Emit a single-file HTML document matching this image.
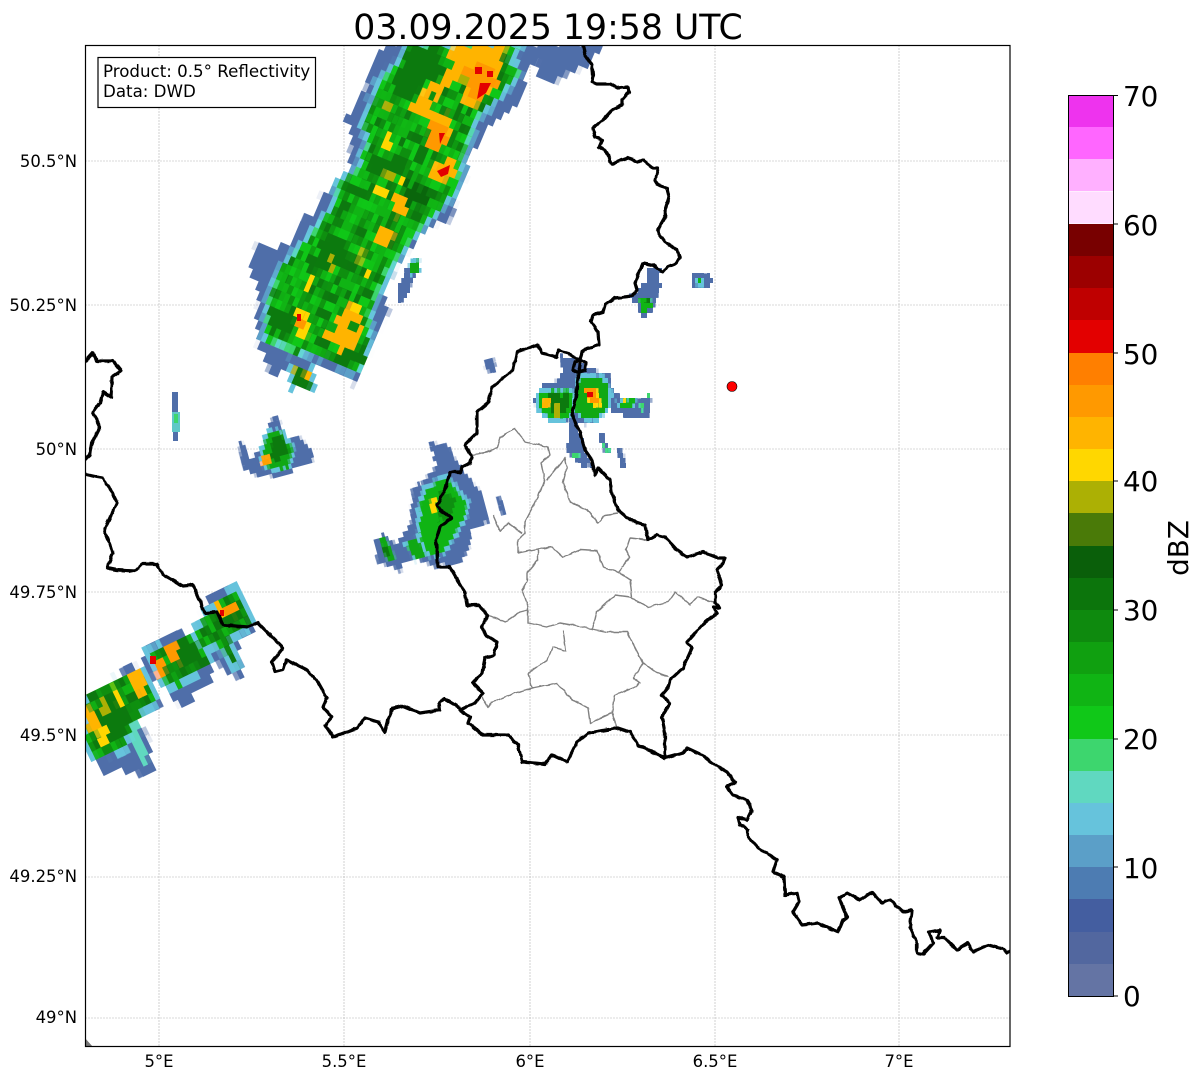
<!DOCTYPE html>
<html><head><meta charset="utf-8"><title>Radar</title>
<style>html,body{margin:0;padding:0;background:#fff}svg{display:block}text{font-family:"DejaVu Sans","Liberation Sans",sans-serif;fill:#000}</style></head>
<body>
<svg xmlns="http://www.w3.org/2000/svg" width="1202" height="1081" viewBox="0 0 1202 1081">
<defs>
<clipPath id="ax"><rect x="85.5" y="45.5" width="924.5" height="1001"/></clipPath>
<filter id="j" filterUnits="userSpaceOnUse" x="0" y="0" width="1202" height="1081" color-interpolation-filters="sRGB">
<feTurbulence type="fractalNoise" baseFrequency=".16" numOctaves="1" seed="4"/>
<feDisplacementMap in="SourceGraphic" scale="8" xChannelSelector="R" yChannelSelector="G"/>
</filter>
<filter id="j2" filterUnits="userSpaceOnUse" x="0" y="0" width="1202" height="1081" color-interpolation-filters="sRGB">
<feTurbulence type="fractalNoise" baseFrequency=".25" numOctaves="1" seed="9"/>
<feDisplacementMap in="SourceGraphic" scale="5" xChannelSelector="R" yChannelSelector="G"/>
</filter>
<filter id="wig" filterUnits="userSpaceOnUse" x="0" y="0" width="1202" height="1081" color-interpolation-filters="sRGB">
<feTurbulence type="fractalNoise" baseFrequency=".17" numOctaves="1" seed="2"/>
<feDisplacementMap in="SourceGraphic" scale="3" xChannelSelector="R" yChannelSelector="G"/>
</filter>
<filter id="px" filterUnits="userSpaceOnUse" x="-600" y="-600" width="2200" height="2200" color-interpolation-filters="sRGB">
<feFlood x="0" y="0" width="1" height="1" flood-color="#000"/>
<feComposite width="5" height="9"/>
<feTile result="a"/>
<feComposite in="SourceGraphic" in2="a" operator="in"/>
<feMorphology operator="dilate" radius="2 4"/>
</filter>
<filter id="px2" filterUnits="userSpaceOnUse" x="-600" y="-600" width="2200" height="2200" color-interpolation-filters="sRGB">
<feFlood x="0" y="0" width="1" height="1" flood-color="#000"/>
<feComposite width="3" height="5"/>
<feTile result="a"/>
<feComposite in="SourceGraphic" in2="a" operator="in"/>
<feMorphology operator="dilate" radius="1 2"/>
</filter>
<filter id="mDark" x="0" y="0" width="100%" height="100%" color-interpolation-filters="sRGB">
<feTurbulence type="fractalNoise" baseFrequency=".075" numOctaves="2" seed="11"/>
<feColorMatrix values="0 0 0 0 .05 0 0 0 0 .47 0 0 0 0 .06 12 0 0 0 -6.2"/>
</filter>
<filter id="mMid" x="0" y="0" width="100%" height="100%" color-interpolation-filters="sRGB">
<feTurbulence type="fractalNoise" baseFrequency=".09" numOctaves="2" seed="23"/>
<feColorMatrix values="0 0 0 0 .055 0 0 0 0 .56 0 0 0 0 .06 12 0 0 0 -5.5"/>
</filter>
<filter id="mLite" x="0" y="0" width="100%" height="100%" color-interpolation-filters="sRGB">
<feTurbulence type="fractalNoise" baseFrequency=".1" numOctaves="2" seed="37"/>
<feColorMatrix values="0 0 0 0 .06 0 0 0 0 .78 0 0 0 0 .09 12 0 0 0 -6.6"/>
</filter>
<polygon id="mg" points="410,46 400,63 380,83 373,107 363,127 370,140 362,160 363,168 340,183 337,200 333,210 313,233 303,247 283,267 273,293 268,310 267,340 283,343 295,352 310,350 317,353 337,360 357,370 368,343 367,317 373,297 383,280 390,267 407,240 420,227 437,207 453,193 460,170 460,157 467,140 473,120 480,113 503,90 517,73 507,57 520,46"/>
<polygon id="b1" points="86,697 118,680 143,673 155,700 137,717 123,747 97,757 86,743"/>
<polygon id="b2" points="148,653 193,637 208,660 177,687 162,680"/>
<polygon id="b3" points="195,633 208,615 227,597 237,590 250,623 233,635 228,633 237,667 220,647 203,647"/>
<clipPath id="cm"><use href="#mg"/></clipPath>
<clipPath id="cb"><use href="#b1"/><use href="#b2"/><use href="#b3"/></clipPath>
</defs>
<rect width="1202" height="1081" fill="#fff"/>
<g stroke="#b4b4b4" stroke-width=".6" stroke-dasharray="2 1" fill="none">
<path d="M159 45V1047M344 45V1047M530 45V1047M715 45V1047M899 45V1047"/>
<path d="M85 161H1010M85 305H1010M85 449H1010M85 592H1010M85 735H1010M85 877H1010M85 1018H1010"/>
</g>
<g clip-path="url(#ax)">

<!-- main storm -->
<g transform="rotate(23)"><g filter="url(#px)"><g transform="rotate(-23)">
<g filter="url(#j)">
<polygon fill="#4f6ea9" stroke="#4f6ea9" stroke-width="6" stroke-linejoin="round" points="390,46 375,65 367,90 360,108 348,118 357,137 352,153 355,167 337,187 323,197 317,217 303,220 290,247 280,247 278,253 258,247 253,273 263,280 260,307 262,330 258,340 265,350 273,373 287,366 305,372 315,366 320,360 340,373 355,382 360,368 372,340 387,313 378,287 390,270 410,247 423,223 447,220 460,187 467,173 462,157 478,143 480,130 507,110 527,83 517,73 540,57 543,73 550,80 580,67 600,50 602,46"/>
<use href="#mg" fill="#5b9fc8" stroke="#5b9fc8" stroke-width="13" stroke-linejoin="round"/>
<use href="#mg" fill="#66c3dc" stroke="#66c3dc" stroke-width="8" stroke-linejoin="round"/>
<use href="#mg" fill="#3dd66e" stroke="#3dd66e" stroke-width="3" stroke-linejoin="round"/>
<use href="#mg" fill="#10b414"/>
<g clip-path="url(#cm)">
<rect x="250" y="40" width="300" height="360" filter="url(#mMid)"/>
<rect x="250" y="40" width="300" height="360" filter="url(#mDark)"/>
<rect x="250" y="40" width="300" height="360" filter="url(#mLite)"/>
</g>
<g fill="#0c7a0e">
<polygon points="412,46 440,46 445,75 425,85 410,100 395,95 395,75"/>
<polygon points="363,157 405,157 407,175 375,177"/>
<polygon fill="#0a660c" points="403,180 433,195 425,207 405,205"/>
<polygon points="343,180 373,187 367,200 347,193"/>
<polygon points="317,237 347,237 347,267 317,267"/>
<polygon points="270,310 293,310 293,333 270,333"/>
<polygon points="337,347 367,347 367,363 337,363"/>
</g>
<polygon fill="#ffb400" points="443,46 453,60 447,77 427,87 410,108 427,123 437,137 428,147 437,155 453,130 447,113 430,107 440,93 457,80 467,87 463,103 473,110 497,83 500,63 508,46"/>
<polygon fill="#ff9900" points="462,70 490,62 497,83 478,103 468,90"/>
<polygon fill="#ff9900" points="430,122 447,125 450,140 437,153 428,145"/>
<polygon fill="#ffb400" points="430,165 455,158 460,175 440,182 430,178"/>
<polygon fill="#acb004" points="460,78 468,78 468,85 460,85"/>
<polygon fill="#0e8f10" points="425,95 432,92 434,100 427,104"/>
<polygon fill="#ffd700" points="375,186 388,187 387,195 375,195"/>
<polygon fill="#ffb400" points="392,197 408,195 408,215 392,218"/>
<polygon fill="#ffb400" points="372,232 385,228 395,232 390,248 378,245"/>
<polygon fill="#ffd700" points="398,172 404,172 403,187 397,187"/>
<polygon fill="#acb004" points="385,170 398,172 392,180 382,178"/>
<polygon fill="#acb004" points="385,105 392,105 392,112 385,112"/>
<polygon fill="#ffd700" points="384,135 392,135 390,148 380,148"/>
<polygon fill="#acb004" points="360,250 365,250 362,262 358,262"/>
<polygon fill="#acb004" points="328,258 334,258 336,272 330,272"/>
<polygon fill="#ffd700" points="308,278 314,278 312,292 306,292"/>
<polygon fill="#ffd700" points="364,270 371,270 369,278 362,278"/>
<polygon fill="#ffd700" points="294,308 308,310 310,335 296,338"/>
<polygon fill="#ff9900" points="297,315 306,315 306,326 298,326"/>
<polygon fill="#ffb400" points="323,333 350,303 362,307 362,340 340,353 335,340"/>
<polygon fill="#ffd700" points="350,303 362,306 362,315 350,315"/>
<rect x="348" y="322" width="9" height="8" fill="#0e8f10"/>
<rect x="328" y="318" width="8" height="11" fill="#10a814"/>
<polygon fill="#0c7a0e" stroke="#66c3dc" stroke-width="3" points="288,368 312,368 314,388 290,388"/>
<rect x="293" y="367" width="5" height="9" fill="#acb004"/>
<rect x="305" y="374" width="6" height="9" fill="#ffb400"/>
</g>
</g></g></g>

<!-- bottom-left band -->
<g transform="rotate(-26)"><g filter="url(#px)"><g transform="rotate(26)">
<g filter="url(#j2)">
<polygon fill="#4f6ea9" points="86,695 118,677 130,663 143,670 143,643 170,632 195,633 200,617 208,593 237,582 255,630 243,637 237,635 243,675 237,677 212,660 212,680 193,692 192,707 185,708 173,702 162,683 150,668 162,710 148,717 143,713 137,727 148,733 155,770 145,775 130,770 103,772 86,753"/>
<g fill="#66c3dc" stroke="#66c3dc" stroke-width="9" stroke-linejoin="round">
<use href="#b1"/><use href="#b2"/><use href="#b3"/>
</g>
<polygon fill="#60d8c0" points="123,717 138,722 150,768 143,768"/>
<g fill="#10b414"><use href="#b1"/><use href="#b2"/><use href="#b3"/></g>
<g clip-path="url(#cb)">
<rect x="85" y="580" width="180" height="190" filter="url(#mMid)"/>
<rect x="85" y="580" width="180" height="190" filter="url(#mDark)"/>
</g>
<polygon fill="#0c7a0e" points="90,715 115,700 135,720 115,745 95,745"/>
<polygon fill="#0c7a0e" points="170,640 195,640 200,655 180,680"/>
<polygon fill="#0c7a0e" points="225,600 240,600 245,622 225,625"/>
<polygon fill="#ffb400" points="213,603 237,605 237,617 222,617"/>
<polygon fill="#ff9900" points="221,608 237,606 236,616 224,618"/>
<polygon fill="#ff9900" points="163,647 176,643 182,663 170,665"/>
<polygon fill="#ff9900" points="152,660 162,655 168,680 158,682"/>
<polygon fill="#ffb400" points="130,677 141,672 146,693 136,695"/>
<polygon fill="#ffd700" points="112,687 118,685 125,707 118,708"/>
<polygon fill="#ffb400" points="86,708 96,712 102,730 92,733 86,722"/>
<polygon fill="#ffd700" points="97,733 107,728 110,745 100,747"/>
<polygon fill="#acb004" points="100,698 110,702 108,718 100,712"/>
</g>
</g></g></g>

<!-- mini & west lux -->
<g transform="rotate(-15)"><g filter="url(#px2)"><g transform="rotate(15)">
<g filter="url(#j2)">
<polygon fill="#4f6ea9" points="238,443 243,443 250,457 262,450 268,423 277,415 280,423 283,437 293,438 300,437 313,453 312,463 297,465 287,477 275,477 253,475 243,468"/>
<polygon fill="#10a814" stroke="#66c3dc" stroke-width="5" paint-order="stroke" points="268,432 283,432 285,440 293,447 288,468 268,468 262,463 263,450"/>
<polygon fill="#0c7a0e" points="272,436 282,436 290,450 280,460 270,460"/>
<rect x="262" y="457" width="8" height="8" fill="#ffa000"/>
<polygon fill="#4f6ea9" points="430,443 447,445 462,470 480,490 490,520 470,530 470,545 458,565 445,565 437,568 420,560 405,560 400,572 390,565 378,565 375,540 385,533 395,545 410,525 412,490 430,475 437,465"/>
<polygon fill="#10b414" stroke="#66c3dc" stroke-width="7" stroke-linejoin="round" paint-order="stroke" points="425,490 445,477 465,500 465,515 445,550 430,555 420,540 420,510"/>
<polygon fill="#0e8f10" points="440,490 457,500 450,520 438,520"/>
<polygon fill="#ffd700" points="430,498 437,498 436,513 431,513"/>
<polygon fill="#10a814" points="379,540 386,537 396,558 388,562"/>
<polygon fill="#0c7a0e" points="381,545 387,545 391,555 385,556"/>
<polygon fill="#10a814" stroke="#66c3dc" stroke-width="3" paint-order="stroke" points="405,545 416,538 427,555 416,560"/>
<polygon fill="#4f6ea9" points="497,497 501,497 506,513 502,514"/>
<rect x="485" y="358" width="10" height="13" fill="#4f6ea9"/>
</g>
</g></g></g>

<!-- NE storm -->
<g filter="url(#px2)">
<g filter="url(#j2)">
<polygon fill="#4f6ea9" points="560,355 573,360 587,368 610,373 612,390 627,403 652,397 648,418 640,418 628,417 617,413 605,408 600,420 583,425 577,423 583,443 593,467 580,465 567,453 570,420 547,420 533,403 543,383 560,380 563,367"/>
<polygon fill="#10b414" stroke="#66c3dc" stroke-width="5" stroke-linejoin="round" paint-order="stroke" points="540,392 567,390 577,397 572,413 563,420 550,420 537,407"/>
<polygon fill="#10a814" stroke="#66c3dc" stroke-width="5" stroke-linejoin="round" paint-order="stroke" points="580,377 603,378 610,393 608,407 597,418 583,418 575,410 578,383"/>
<polygon fill="#0c7a0e" points="548,395 570,395 568,412 552,415"/>
<polygon fill="#ffd700" points="582,388 597,388 603,407 590,405"/>
<polygon fill="#ff9900" points="584,390 595,390 599,403 591,401"/>
<rect x="542" y="400" width="8" height="7" fill="#ffb400"/>
<polygon fill="#acb004" points="553,405 560,405 561,420 555,420"/>
<polygon fill="#10b414" stroke="#66c3dc" stroke-width="2" paint-order="stroke" points="617,402 637,398 633,407 620,408"/>
<rect x="625" y="401" width="6" height="3" fill="#ffd700"/>
<polygon fill="#4f6ea9" points="638,403 646,403 648,418 640,418"/>
<rect x="640" y="404" width="3" height="7" fill="#3dd66e"/>
<rect x="647" y="395" width="4" height="4" fill="#3dd66e"/>
<polygon fill="#4f6ea9" points="598,433 603,433 610,452 604,452"/>
<polygon fill="#3dd66e" points="601,442 604,442 609,450 606,451"/>
<polygon fill="#4f6ea9" points="617,448 622,448 626,468 621,468"/>
<polygon fill="#3dd66e" points="572,452 579,452 580,459 574,459"/>
<polygon fill="#4f6ea9" points="647,267 662,270 658,278 662,287 657,295 656,303 648,315 642,317 637,305 628,297 638,290 648,278"/>
<polygon fill="#10b414" points="638,298 652,296 652,307 644,313 641,305"/>
<rect x="645" y="298" width="5" height="6" fill="#0c7a0e"/>
<polygon fill="#4f6ea9" points="692,273 710,275 713,282 703,290 692,288"/>
<polygon fill="#66c3dc" points="694,278 705,278 703,286 694,285"/>
<rect x="697" y="280" width="5" height="3" fill="#10b414"/>
<polygon fill="#4f6ea9" points="397,303 400,285 412,260 420,262 415,275 405,300"/>
<polygon fill="#10a814" stroke="#66c3dc" stroke-width="2" paint-order="stroke" points="409,262 419,260 420,270 411,274"/>
</g>
</g>
<!-- strip -->
<rect x="172" y="392" width="6" height="20" fill="#4f6ea9"/>
<rect x="172" y="412" width="8" height="20" fill="#5fc8c8"/>
<rect x="174" y="414" width="4" height="9" fill="#3dd66e"/>
<rect x="173" y="432" width="5" height="9" fill="#4f6ea9"/>
<!-- reds on top -->
<g fill="#e30000">
<rect x="475" y="67" width="7" height="7"/>
<rect x="487" y="71" width="6" height="6"/>
<polygon points="480,83 491,83 486,93 477,99"/>
<polygon points="439,133 445,133 440,144"/>
<polygon points="437,171 450,165 448,174 441,177"/>
<rect x="297" y="314" width="4" height="7"/>
<rect x="220" y="610" width="4" height="6"/>
<rect x="150" y="656" width="6" height="8"/>
<rect x="587" y="392" width="6" height="5"/>
</g>
<!-- corner -->
<polygon points="85,1038 93,1047 85,1047" fill="#777"/>
<!-- districts -->
<g fill="none" stroke="#808080" stroke-width="1.4" stroke-linejoin="round" filter="url(#wig)">
<path d="M472 455L487 452 497 448 500 437 515 429 525 442 548 447 550 455 541 463 545 480 535 503 525 522 525 533 518 540 518 553 538 549 552 547 563 557 580 550 597 551 603 567 618 572 630 580 632 597"/>
<path d="M547 480L565 458 567 467 563 483 570 502 587 510 598 523 605 515 618 513"/>
<path d="M493 515L500 531 508 523 522 533"/>
<path d="M647 540L630 538 626 550 630 557 618 572"/>
<path d="M538 549L538 560 527 573 527 582 522 590 528 607 528 623 547 627 560 623 577 626 592 629"/>
<path d="M488 615L505 622 520 612 528 610"/>
<path d="M592 629L597 612 615 595 630 597 648 607 668 602 675 592 690 605 697 597 717 603"/>
<path d="M592 629L607 632 627 632 643 663 657 673 668 677"/>
<path d="M643 663L633 678 640 683 635 687 615 695 612 713 617 728"/>
<path d="M612 713L590 723 588 708 570 698 557 683 532 688 528 673 547 660 553 647 566 651 563 630"/>
<path d="M532 688L515 693 493 702 488 707 482 697"/>
</g>
<!-- black borders -->
<g fill="none" stroke="#000" stroke-width="3.2" stroke-linejoin="round" stroke-linecap="round" filter="url(#wig)">
<path d="M583 45L585 55 592 65 593 75 592 82 597 84 610 84 617 88 628 87 629 92 622 100 622 105 613 109 603 120 593 128 595 137 602 140 599 147 605 150 612 164 622 160 628 158 638 162 643 160 653 168 658 168 655 180 658 185 667 188 669 197 665 210 666 215 657 231 665 242 677 250 680 258 677 263 667 267 663 272 653 265 643 263 638 275 635 283 637 290 632 296 615 298 605 305 603 312 593 315 591 322 598 332 599 345 588 348 582 352 580 360 586 363 585 370 577 372 573 370 575 362 580 360 578 377 576 397 572 415 580 433 585 450 592 460 595 475 598 468 610 480 612 495 618 510 630 520 645 525 648 540 657 535 665 537 677 550 687 557 703 552 718 558 725 558 722 565 717 570 722 585 715 592 715 603 720 608 713 607 717 613 702 625 687 642 692 648 683 668 670 680 668 688 662 695 670 703 662 717 665 733 665 758"/>
<path d="M580 360L573 357 568 353 558 350 557 357 542 353 538 345 517 352 513 370 492 387 488 403 477 412 477 433 465 445 472 457 470 463 462 467 460 472 450 472 445 490 437 505 440 510 452 518 440 527 436 540 438 567 450 567 465 593 467 605 478 605 488 615 482 627 485 635 497 642 494 655 485 658 482 673 473 683 483 693 475 703 460 710 470 717 468 723 483 735 508 735 518 745 522 762 545 764 552 755 567 762 577 742 588 733 618 728 630 732 638 745 665 758 683 753 687 748 702 755 712 763 727 772 735 782 727 787 733 795 747 800 752 810 747 820 738 817 740 825 748 830 748 837 757 847 777 860 773 872 784 877 785 895 797 893 799 902 793 912 802 925 818 923 838 932 843 920 847 917 839 898 847 893 860 900 872 892 882 903 890 900 903 912 912 910 910 927 917 943 917 953 923 954 933 943 929 932 940 930 937 938 945 938 957 950 968 943 973 952 988 945 1003 949 1007 953 1012 950"/>
<path d="M460 708L445 699 439 702 440 710 420 713 403 706 393 708 388 720 385 732 378 722 365 718 357 728 333 737 325 725 332 717 323 707 327 698 318 682 307 670 287 660 283 670 275 672 272 662 283 648 258 623 248 627 223 625 217 612 205 613 193 585 183 586 163 575 157 564 142 564 135 571 117 570 107 568 113 553 105 533 105 528 117 503 113 493 102 478 84 474"/>
<path d="M84 363L93 353 97 361 113 361 121 371 112 377 111 397 103 392 100 403 93 412 100 427 92 443 90 455 84 460"/>
</g>
<circle cx="732" cy="386.5" r="5" fill="#f00" stroke="#000" stroke-width=".6"/>
</g>
<rect x="85.5" y="45.5" width="924.5" height="1001" fill="none" stroke="#000" stroke-width="1.2"/>
<rect x="98" y="57.5" width="217.5" height="50" fill="#fff" stroke="#000" stroke-width="1.2"/>
<text x="103" y="77" font-size="16.67">Product: 0.5° Reflectivity</text>
<text x="103" y="97" font-size="16.67">Data: DWD</text>
<text x="548" y="39" font-size="34.7" text-anchor="middle">03.09.2025 19:58 UTC</text>
<g font-size="16.45" text-anchor="end">
<text x="77" y="167">50.5°N</text><text x="77" y="311">50.25°N</text><text x="77" y="455">50°N</text><text x="77" y="598">49.75°N</text><text x="77" y="741">49.5°N</text><text x="77" y="882">49.25°N</text><text x="77" y="1023">49°N</text>
</g>
<g font-size="16.45" text-anchor="middle">
<text x="159" y="1067">5°E</text><text x="344" y="1067">5.5°E</text><text x="530" y="1067">6°E</text><text x="715" y="1067">6.5°E</text><text x="899" y="1067">7°E</text>
</g>
<!-- colorbar -->
<g shape-rendering="crispEdges">
<rect x="1068.5" y="95.5" width="45" height="32" fill="#ee33ee"/>
<rect x="1068.5" y="127" width="45" height="32.2" fill="#ff66ff"/>
<rect x="1068.5" y="159" width="45" height="32.2" fill="#ffb0ff"/>
<rect x="1068.5" y="191.5" width="45" height="32.2" fill="#ffdcff"/>
<rect x="1068.5" y="224" width="45" height="32.2" fill="#780000"/>
<rect x="1068.5" y="256" width="45" height="32.2" fill="#9c0000"/>
<rect x="1068.5" y="288" width="45" height="32.2" fill="#bf0000"/>
<rect x="1068.5" y="320" width="45" height="33" fill="#e30000"/>
<rect x="1068.5" y="353" width="45" height="32.2" fill="#ff7f00"/>
<rect x="1068.5" y="385" width="45" height="32.2" fill="#ff9900"/>
<rect x="1068.5" y="417" width="45" height="32.2" fill="#ffb400"/>
<rect x="1068.5" y="449" width="45" height="32.2" fill="#ffd700"/>
<rect x="1068.5" y="481" width="45" height="32.2" fill="#acb004"/>
<rect x="1068.5" y="513" width="45" height="33" fill="#4a7a08"/>
<rect x="1068.5" y="546" width="45" height="32.2" fill="#0a5f0a"/>
<rect x="1068.5" y="578" width="45" height="32.2" fill="#0c750c"/>
<rect x="1068.5" y="610" width="45" height="32.2" fill="#0e8a0e"/>
<rect x="1068.5" y="642" width="45" height="32.2" fill="#10a010"/>
<rect x="1068.5" y="674" width="45" height="32.2" fill="#10b414"/>
<rect x="1068.5" y="706" width="45" height="33" fill="#10c818"/>
<rect x="1068.5" y="739" width="45" height="32" fill="#3dd66e"/>
<rect x="1068.5" y="771" width="45" height="32" fill="#60d8c0"/>
<rect x="1068.5" y="803" width="45" height="32" fill="#66c3dc"/>
<rect x="1068.5" y="835" width="45" height="32" fill="#5b9fc8"/>
<rect x="1068.5" y="867" width="45" height="32" fill="#4d7cb2"/>
<rect x="1068.5" y="899" width="45" height="33" fill="#445ea0"/>
<rect x="1068.5" y="932" width="45" height="32" fill="#52679f"/>
<rect x="1068.5" y="964" width="45" height="32.5" fill="#6474a4"/>
</g>
<rect x="1068.5" y="95.5" width="45" height="901" fill="none" stroke="#000" stroke-width="1"/>
<path d="M1113 95.5h5M1113 224h5M1113 353h5M1113 481h5M1113 610h5M1113 739h5M1113 867h5M1113 996h5" stroke="#000" stroke-width="1"/>
<g font-size="27.8">
<text x="1123" y="106">70</text><text x="1123" y="235">60</text><text x="1123" y="364">50</text><text x="1123" y="491">40</text><text x="1123" y="620">30</text><text x="1123" y="749">20</text><text x="1123" y="878">10</text><text x="1123" y="1006">0</text>
</g>
<text transform="translate(1188 548) rotate(-90)" font-size="27.8" text-anchor="middle">dBZ</text>
</svg>
</body></html>
